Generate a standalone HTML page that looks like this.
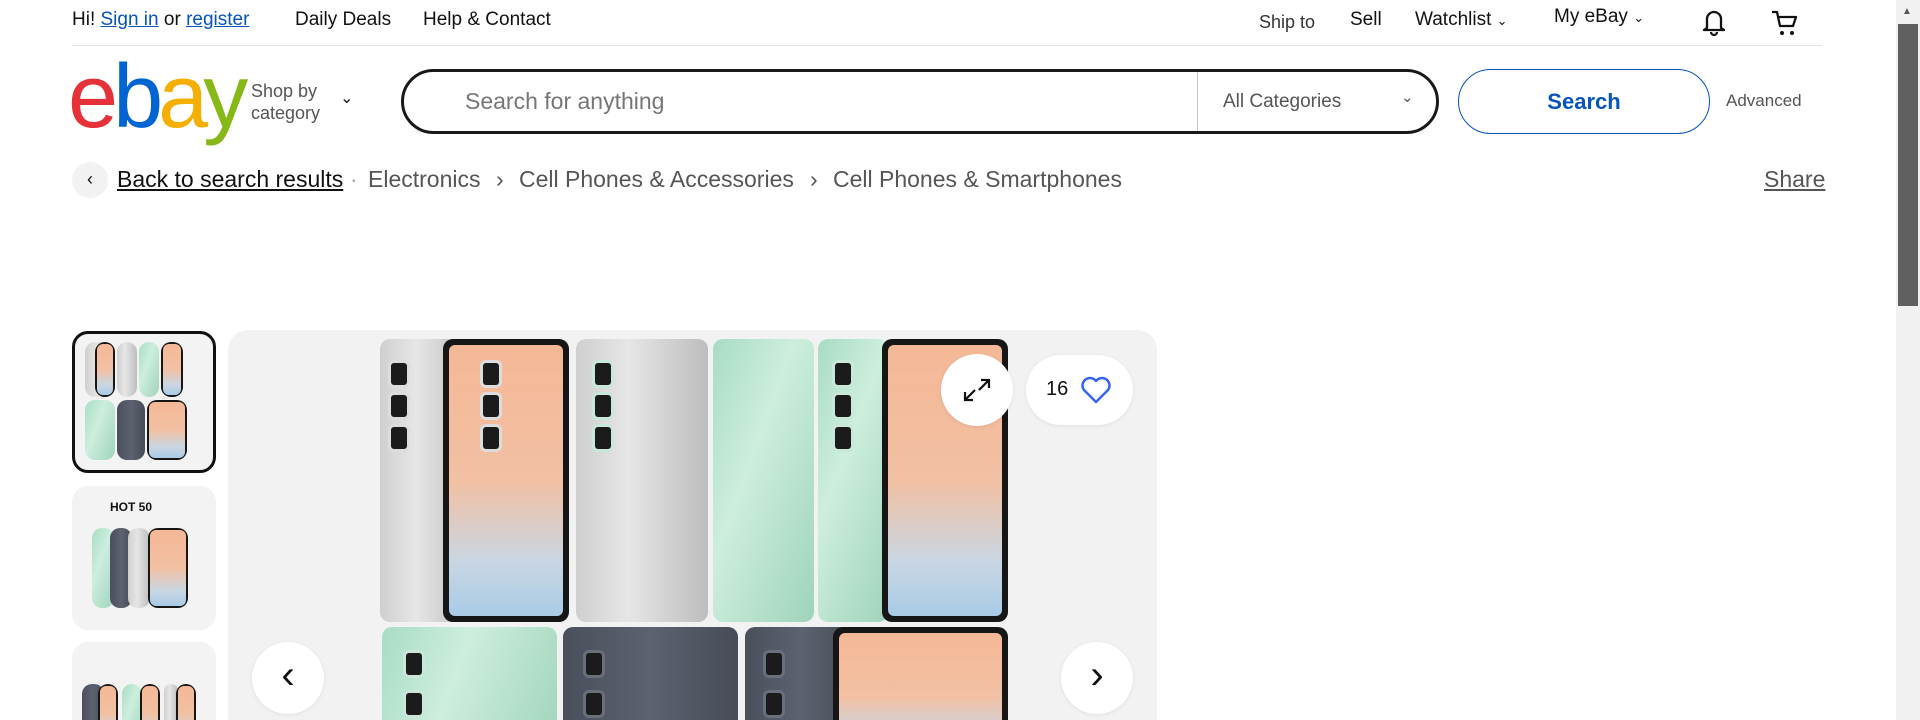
<!DOCTYPE html>
<html style="height:720px;overflow:hidden"><head><meta charset="utf-8"><style>
*{box-sizing:border-box;margin:0;padding:0}
body{width:1920px;height:720px;overflow:hidden;background:#fff;font-family:"Liberation Sans",Arial,sans-serif;position:relative;color:#111}
.a{position:absolute;white-space:nowrap}
.top{font-size:19px;top:9px}
a{color:#0654ba}
.bc{font-size:23px;color:#555;top:166px}
.ph{position:absolute;border-radius:10px}
.silver{background:linear-gradient(90deg,#cfcfcf,#e6e6e6 40%,#bdbdbd)}
.mint{background:linear-gradient(110deg,#a8dcc4,#cdeedd 40%,#9fd3bb)}
.dark{background:linear-gradient(90deg,#4a4f5c,#5d6270 50%,#464b57)}
.scr{background:#161616;padding:6px}
.scr div{width:100%;height:100%;border-radius:6px;background:linear-gradient(180deg,#f4b896 0%,#f2c0a3 50%,#c9d6e3 80%,#a9cbe6 100%)}
.cam{position:absolute;width:22px;height:28px;background:#1b1b1b;border-radius:6px;border:3px solid #ddd}
.circ{position:absolute;background:#fff;border-radius:50%;box-shadow:0 1px 4px rgba(0,0,0,.08)}
</style></head><body>
<div class="a top" style="left:72px">Hi! <a href="#">Sign in</a> or <a href="#">register</a></div>
<div class="a top" style="left:295px">Daily Deals</div>
<div class="a top" style="left:423px">Help &amp; Contact</div>
<div class="a top" style="left:1259px;top:12px;color:#333;font-size:18px">Ship to</div>
<div class="a top" style="left:1350px">Sell</div>
<div class="a top" style="left:1415px">Watchlist <span style="font-size:13px">&#8964;</span></div>
<div class="a top" style="left:1554px;top:6px">My eBay <span style="font-size:13px">&#8964;</span></div>
<svg class="a" style="left:1700px;top:7px" width="28" height="30" viewBox="0 0 28 30"><path d="M7 21V12a7 7 0 0 1 14 0v9l3 2H4z M11 25a3 3 0 0 0 6 0" fill="none" stroke="#111" stroke-width="2.3" stroke-linejoin="round"/></svg>
<svg class="a" style="left:1770px;top:8px" width="30" height="30" viewBox="0 0 30 30"><path d="M2 4h5l3 14h13l3-9H9" fill="none" stroke="#111" stroke-width="2.3" stroke-linejoin="round"/><circle cx="12" cy="25" r="2" fill="#111"/><circle cx="22" cy="25" r="2" fill="#111"/></svg>
<div class="a" style="left:72px;top:45px;width:1750px;height:1px;background:#e5e5e5"></div>
<div class="a" style="left:68px;top:46px;font-size:90px;letter-spacing:-5px;font-weight:400"><span style="color:#e53238">e</span><span style="color:#0064d2">b</span><span style="color:#f5af02">a</span><span style="color:#86b817">y</span></div>
<div class="a" style="left:251px;top:80px;font-size:18px;line-height:22px;color:#555">Shop by<br>category</div>
<div class="a" style="left:340px;top:88px;font-size:16px">&#8964;</div>
<div class="a" style="left:401px;top:69px;width:1038px;height:65px;border:3px solid #191919;border-radius:33px"></div>
<div class="a" style="left:465px;top:88px;font-size:23px;color:#767676">Search for anything</div>
<div class="a" style="left:1197px;top:72px;width:1px;height:59px;background:#c7c7c7"></div>
<div class="a" style="left:1223px;top:91px;font-size:19px;color:#555">All Categories</div>
<div class="a" style="left:1401px;top:88px;font-size:15px;color:#555">&#8964;</div>
<div class="a" style="left:1458px;top:69px;width:252px;height:65px;border:1px solid #0654ba;border-radius:33px;text-align:center;line-height:63px;font-size:22px;font-weight:bold;color:#0654ba">Search</div>
<div class="a" style="left:1726px;top:91px;font-size:17px;color:#555">Advanced</div>
<div class="a" style="left:72px;top:162px;width:36px;height:36px;border-radius:50%;background:#f2f2f2;text-align:center;line-height:34px;font-size:18px">&#8249;</div>
<div class="a bc" style="left:117px;color:#111;text-decoration:underline">Back to search results</div>
<div class="a bc" style="left:350px;color:#aaa">·</div>
<div class="a bc" style="left:368px">Electronics</div>
<div class="a bc" style="left:496px">›</div>
<div class="a bc" style="left:519px">Cell Phones &amp; Accessories</div>
<div class="a bc" style="left:810px">›</div>
<div class="a bc" style="left:833px">Cell Phones &amp; Smartphones</div>
<div class="a bc" style="left:1764px;text-decoration:underline">Share</div>
<div class="a" style="left:1896px;top:0;width:24px;height:720px;background:#f1f1f1"></div>
<div class="a" style="left:1898px;top:24px;width:20px;height:282px;background:#5f5f5f"></div>
<div class="a" style="left:1902px;top:6px;font-size:10px;color:#555">▲</div>
<div class="a" style="left:72px;top:331px;width:144px;height:142px;border:3px solid #111;border-radius:16px;background:#f3f3f3;overflow:hidden">
<div class="ph silver" style="left:10px;top:8px;width:28px;height:55px"></div><div class="ph scr" style="left:20px;top:8px;width:20px;height:55px;padding:2px"><div></div></div>
<div class="ph silver" style="left:42px;top:8px;width:20px;height:55px"></div><div class="ph mint" style="left:64px;top:8px;width:20px;height:55px"></div><div class="ph scr" style="left:86px;top:8px;width:22px;height:55px;padding:2px"><div></div></div>
<div class="ph mint" style="left:10px;top:66px;width:30px;height:60px"></div><div class="ph dark" style="left:42px;top:66px;width:28px;height:60px"></div><div class="ph scr" style="left:72px;top:66px;width:40px;height:60px;padding:2px"><div></div></div>
</div>
<div class="a" style="left:72px;top:486px;width:144px;height:144px;border-radius:16px;background:#f3f3f3;overflow:hidden">
<div class="a" style="left:38px;top:14px;font-size:12px;font-weight:bold">HOT 50</div>
<div class="ph mint" style="left:20px;top:42px;width:22px;height:80px"></div><div class="ph dark" style="left:38px;top:42px;width:22px;height:80px"></div><div class="ph silver" style="left:56px;top:42px;width:22px;height:80px"></div><div class="ph scr" style="left:76px;top:42px;width:40px;height:80px;padding:2px"><div></div></div>
</div>
<div class="a" style="left:72px;top:642px;width:144px;height:78px;border-radius:16px 16px 0 0;background:#f3f3f3;overflow:hidden">
<div class="ph dark" style="left:10px;top:42px;width:22px;height:60px"></div><div class="ph scr" style="left:26px;top:42px;width:20px;height:60px;padding:2px"><div></div></div><div class="ph mint" style="left:50px;top:42px;width:20px;height:60px"></div><div class="ph scr" style="left:68px;top:42px;width:20px;height:60px;padding:2px"><div></div></div><div class="ph silver" style="left:92px;top:42px;width:14px;height:60px"></div><div class="ph scr" style="left:104px;top:42px;width:20px;height:60px;padding:2px"><div></div></div>
</div>
<div class="a" style="left:228px;top:330px;width:929px;height:390px;border-radius:20px 20px 0 0;background:#f2f2f2;overflow:hidden">
<div class="ph silver" style="left:152px;top:9px;width:90px;height:283px"></div>
<div class="ph scr" style="left:215px;top:9px;width:126px;height:283px"><div></div></div>
<div class="ph silver" style="left:348px;top:9px;width:132px;height:283px"></div>
<div class="ph mint" style="left:485px;top:9px;width:101px;height:283px"></div>
<div class="ph mint" style="left:590px;top:9px;width:70px;height:283px"></div>
<div class="ph scr" style="left:654px;top:9px;width:126px;height:283px"><div></div></div>
<div class="cam" style="left:160px;top:30px"></div><div class="cam" style="left:160px;top:62px"></div><div class="cam" style="left:160px;top:94px"></div>
<div class="cam" style="left:252px;top:30px"></div><div class="cam" style="left:252px;top:62px"></div><div class="cam" style="left:252px;top:94px"></div>
<div class="cam" style="left:364px;top:30px;border-color:#c9e8da"></div><div class="cam" style="left:364px;top:62px;border-color:#c9e8da"></div><div class="cam" style="left:364px;top:94px;border-color:#c9e8da"></div>
<div class="cam" style="left:604px;top:30px;border-color:#c9e8da"></div><div class="cam" style="left:604px;top:62px;border-color:#c9e8da"></div><div class="cam" style="left:604px;top:94px;border-color:#c9e8da"></div>
<div class="ph mint" style="left:154px;top:297px;width:175px;height:140px"></div>
<div class="ph dark" style="left:335px;top:297px;width:175px;height:140px"></div>
<div class="ph dark" style="left:517px;top:297px;width:112px;height:140px"></div>
<div class="ph scr" style="left:605px;top:297px;width:175px;height:140px"><div></div></div>
<div class="cam" style="left:175px;top:320px;border-color:#c9e8da"></div><div class="cam" style="left:175px;top:360px;border-color:#c9e8da"></div>
<div class="cam" style="left:355px;top:320px;border-color:#6a6f7c"></div><div class="cam" style="left:355px;top:360px;border-color:#6a6f7c"></div>
<div class="cam" style="left:535px;top:320px;border-color:#6a6f7c"></div><div class="cam" style="left:535px;top:360px;border-color:#6a6f7c"></div>
</div>
<div class="circ" style="left:941px;top:354px;width:72px;height:72px"><svg width="72" height="72" viewBox="0 0 72 72"><path d="M40 26h8v8M48 26L38 36M32 46h-8v-8M24 46l10-10" fill="none" stroke="#111" stroke-width="2.2"/></svg></div>
<div class="circ" style="left:1026px;top:355px;width:107px;height:70px;border-radius:35px"><span class="a" style="left:20px;top:23px;font-size:20px">16</span><svg class="a" style="left:54px;top:20px" width="32" height="30" viewBox="0 0 32 30"><path d="M16 27L4 15a7 7 0 0 1 12-9 7 7 0 0 1 12 9z" fill="none" stroke="#3665f3" stroke-width="2.5" stroke-linejoin="round"/></svg></div>
<div class="circ" style="left:252px;top:642px;width:72px;height:72px;text-align:center;line-height:66px;font-size:40px">&#8249;</div>
<div class="circ" style="left:1061px;top:642px;width:72px;height:72px;text-align:center;line-height:66px;font-size:40px">&#8250;</div>
</body></html>
